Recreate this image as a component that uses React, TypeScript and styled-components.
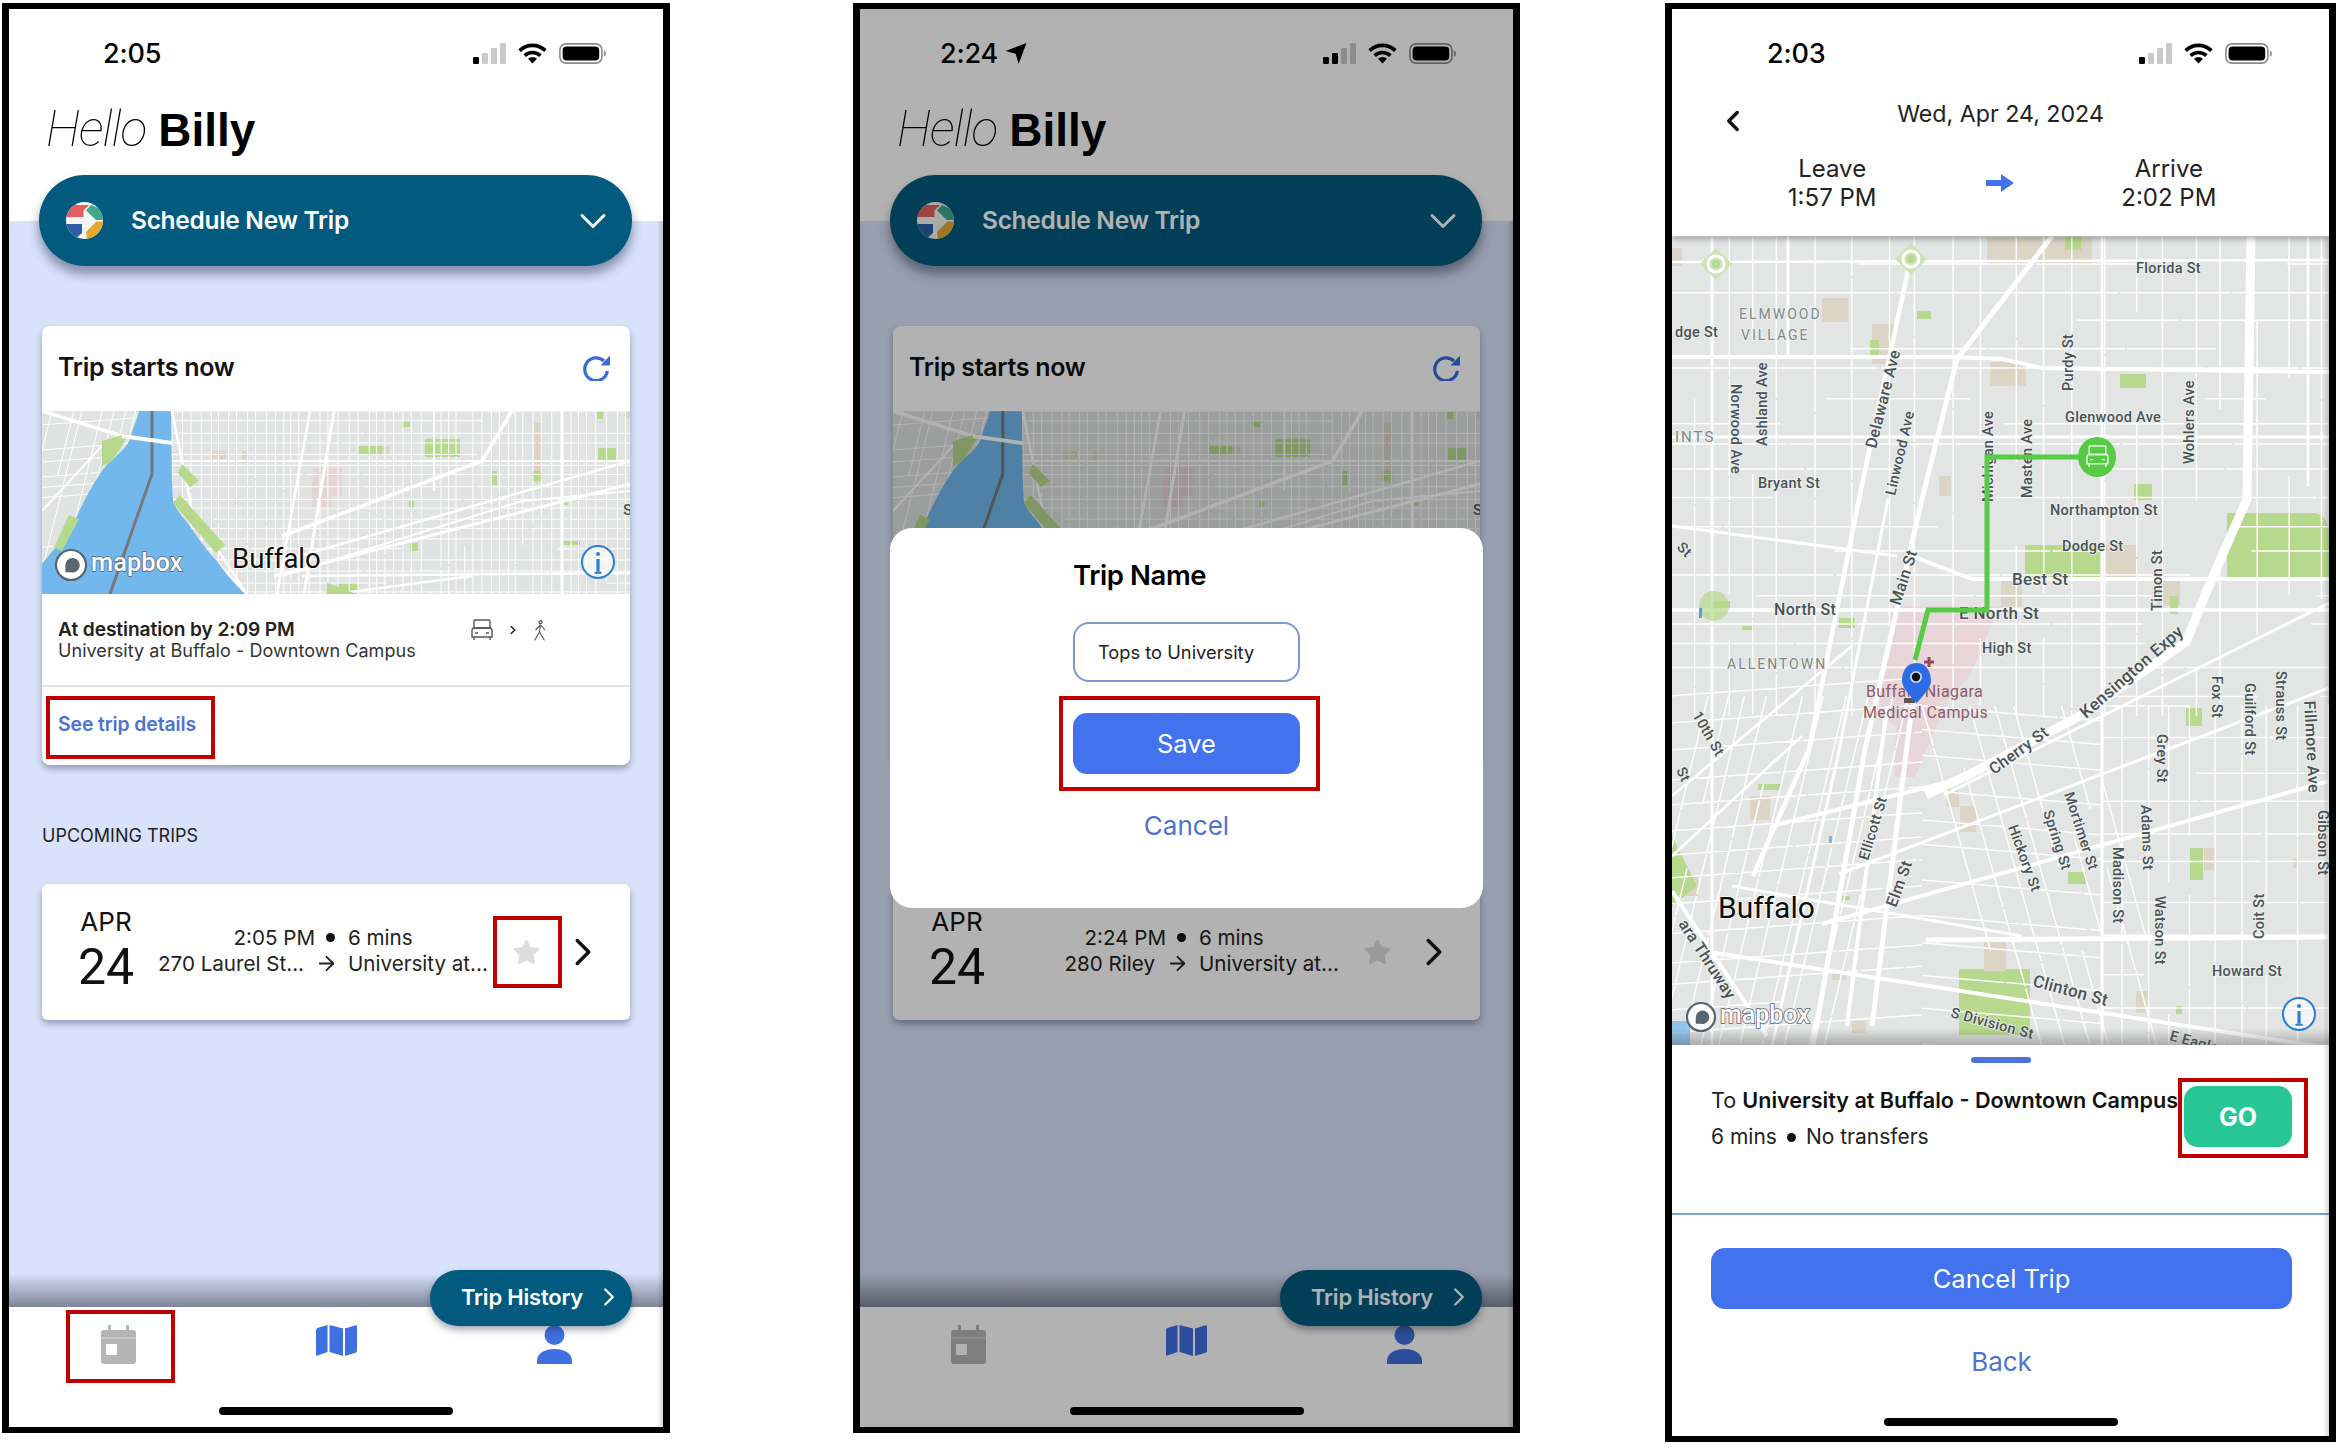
import React from 'react';
import styled, { createGlobalStyle } from 'styled-components';
import { ChevronDown, ChevronLeft, ChevronRight, ArrowRight } from 'lucide-react';

const BLUE = '#4272ee';
const LINK = '#4d72d6';
const TEAL = '#025a7e';
const RED = '#c00000';

const Global = createGlobalStyle`
  html, body { margin: 0; padding: 0; background: #fff; }
  body { font-family: Inter, "Liberation Sans", sans-serif; color: #111; }
  * { box-sizing: border-box; }
`;

const Stage = styled.div`
  width: 2346px;
  height: 1448px;
  overflow: hidden;
  display: flex;
  align-items: flex-start;
  padding: 3px 0 0 2px;
`;

const Phone = styled.section<{ $w: number; $h: number; $mr: number }>`
  position: relative;
  flex: none;
  width: ${p => p.$w}px;
  height: ${p => p.$h}px;
  margin-right: ${p => p.$mr}px;
  border-style: solid;
  border-color: #000;
  border-width: 6px 7px;
  background: #fff;
  overflow: hidden;
  display: flex;
  flex-direction: column;
  &::after {
    content: '';
    position: absolute;
    top: 0;
    bottom: 0;
    right: 0;
    width: 6px;
    background: linear-gradient(90deg, rgba(0,0,0,0), rgba(0,0,0,.16));
    pointer-events: none;
  }
`;

const StatusRow = styled.div<{ $left: number }>`
  flex: none;
  height: 88px;
  display: flex;
  align-items: center;
  justify-content: space-between;
  padding: 0 57px 0 ${p => p.$left}px;
`;
const TimeGroup = styled.div`
  display: flex;
  align-items: center;
  gap: 7px;
`;
const Time = styled.span`
  font-size: 27px;
  font-weight: 500;
  letter-spacing: -0.2px;
  color: #000;
`;
const StatusIcons = styled.div`
  display: flex;
  align-items: center;
  gap: 12px;
`;

const Header = styled.header`
  position: relative;
  z-index: 1;
  flex: none;
  background: #fff;
  padding-bottom: 0;
`;
const Greeting = styled.h1`
  margin: 9px 0 22px 37px;
  font-family: "Liberation Sans", Arial, sans-serif;
  font-size: 46px;
  line-height: 46px;
  font-weight: 400;
  color: #000;
`;
const Hello = styled.em`
  font-family: Roboto, "Liberation Sans", sans-serif;
  font-size: 50px;
  font-weight: 100;
  font-style: italic;
  letter-spacing: -1px;
  margin-right: 12px;
`;
const Name = styled.strong`
  font-weight: 700;
`;
const SchedulePill = styled.div`
  position: relative;
  height: 91px;
  margin: 0 31px -45px 30px;
  padding: 0 17px 0 27px;
  border-radius: 46px;
  background: ${TEAL};
  box-shadow: 0 8px 11px rgba(30, 40, 70, .45);
  display: flex;
  align-items: center;
  color: #fff;
`;
const PillTitle = styled.span`
  flex: 1;
  margin: 0 0 2px 28px;
  font-size: 24.5px;
  font-weight: 600;
  letter-spacing: -0.3px;
`;

const Body = styled.main`
  position: relative;
  flex: 1;
  background: #d8e2fa;
  padding: 105px 33px 0;
  &::after {
    content: '';
    position: absolute;
    left: 0;
    right: 0;
    bottom: 0;
    height: 34px;
    background: linear-gradient(180deg, rgba(40, 42, 55, 0), rgba(40, 42, 55, .5));
  }
`;
const Card = styled.article`
  background: #fff;
  border-radius: 8px;
  box-shadow: 0 4px 6px rgba(50, 60, 90, .4);
  overflow: hidden;
`;
const CardHead = styled.div`
  height: 85px;
  display: flex;
  align-items: center;
  justify-content: space-between;
  padding: 0 19px 3px 16px;
`;
const CardTitle = styled.h2`
  margin: 0;
  font-size: 25px;
  font-weight: 600;
  letter-spacing: -0.3px;
  color: #111;
`;
const MapFrame = styled.svg`
  display: block;
  width: 100%;
`;
const CardInfo = styled.div`
  height: 93px;
  display: flex;
  justify-content: space-between;
  align-items: flex-start;
  padding: 25px 83px 0 16px;
  border-bottom: 2px solid #e4e4e4;
`;
const InfoTitle = styled.div`
  font-size: 19.2px;
  line-height: 21px;
  font-weight: 600;
  color: #222;
  letter-spacing: -0.1px;
`;
const InfoSub = styled.div`
  font-size: 18px;
  line-height: 21px;
  color: #333;
  letter-spacing: .05px;
`;
const ModeIcons = styled.div`
  display: flex;
  align-items: center;
  gap: 13px;
  color: #555;
`;
const CardLink = styled.div`
  height: 78px;
  display: flex;
  align-items: center;
  padding: 0 16px 4px;
  font-size: 19.4px;
  font-weight: 600;
  color: ${LINK};
  letter-spacing: -0.1px;
`;
const SectionLabel = styled.h3`
  margin: 62px 0 39px;
  font-size: 18px;
  line-height: 18px;
  font-weight: 400;
  color: #222;
`;
const TripRow = styled.article`
  height: 136px;
  background: #fff;
  border-radius: 6px;
  box-shadow: 0 4px 6px rgba(50, 60, 90, .4);
  display: flex;
  align-items: center;
  padding-left: 32px;
`;
const DateBlock = styled.div`
  width: 64px;
  display: flex;
  flex-direction: column;
  align-items: center;
  margin-top: -5px;
`;
const Month = styled.span`
  font-size: 26px;
  line-height: 30px;
  color: #111;
`;
const Day = styled.span`
  font-family: Roboto, Inter, sans-serif;
  font-size: 50px;
  line-height: 50px;
  margin-top: 5px;
  color: #111;
`;
const TripGrid = styled.div`
  margin: -3px 0 0 20px;
  width: 332px;
  display: grid;
  grid-template-columns: 154px 36px 1fr;
  grid-auto-rows: 26px;
  align-items: center;
  font-size: 20.6px;
  color: #222;
  white-space: nowrap;
`;
const CellEnd = styled.span<{ $pull?: number }>`
  justify-self: end;
  margin-right: ${p => p.$pull ?? 0}px;
`;
const CellMid = styled.span<{ $pull?: number }>`
  justify-self: center;
  display: flex;
  margin-right: ${p => p.$pull ?? 0}px;
`;
const Dot = styled.i`
  width: 9px;
  height: 9px;
  border-radius: 50%;
  background: #111;
`;
const StarSlot = styled.div`
  margin-left: 23px;
  display: flex;
`;
const ChevronSlot = styled.div`
  margin-left: 20px;
  display: flex;
  color: #111;
`;

const TabBar = styled.nav`
  flex: none;
  height: 120px;
  background: #fff;
  display: flex;
  flex-direction: column;
  align-items: center;
`;
const TabIcons = styled.div`
  width: 100%;
  height: 100px;
  display: grid;
  grid-template-columns: repeat(3, 1fr);
  padding-top: 18px;
`;
const Tab = styled.div`
  display: flex;
  justify-content: center;
  align-items: flex-start;
`;
const HomeBar = styled.div<{ $top?: number }>`
  flex: none;
  width: 234px;
  height: 8px;
  margin: ${p => p.$top ?? 0}px auto 0;
  border-radius: 4px;
  background: #000;
`;
const HistoryPill = styled.div`
  position: absolute;
  z-index: 2;
  right: 31px;
  bottom: 101px;
  width: 202px;
  height: 56px;
  padding: 0 8px 2px 31px;
  border-radius: 28px;
  background: ${TEAL};
  box-shadow: 0 4px 7px rgba(30, 40, 70, .4);
  color: #fff;
  display: flex;
  align-items: center;
  justify-content: space-between;
  font-size: 22px;
  font-weight: 600;
  letter-spacing: -0.2px;
`;
const Highlight = styled.div<{ $x: number; $y: number; $w: number; $h: number }>`
  position: absolute;
  z-index: 6;
  left: ${p => p.$x}px;
  top: ${p => p.$y}px;
  width: ${p => p.$w}px;
  height: ${p => p.$h}px;
  border: 4px solid ${RED};
`;
const Dim = styled.div`
  position: absolute;
  z-index: 3;
  inset: 0;
  background: rgba(0, 0, 0, .3);
`;
const Modal = styled.div`
  position: absolute;
  z-index: 4;
  left: 30px;
  top: 519px;
  width: 593px;
  height: 380px;
  padding-top: 31px;
  background: #fff;
  border-radius: 22px;
  display: flex;
  flex-direction: column;
  align-items: center;
`;
const ModalColumn = styled.div`
  width: 227px;
  display: flex;
  flex-direction: column;
  align-items: center;
`;
const ModalTitle = styled.h2`
  align-self: flex-start;
  margin: 0 0 31px;
  font-size: 27.5px;
  line-height: 32px;
  font-weight: 600;
  letter-spacing: -0.4px;
  color: #000;
`;
const NameField = styled.div`
  width: 100%;
  height: 60px;
  padding-left: 23px;
  display: flex;
  align-items: center;
  border: 2px solid #7b98cf;
  border-radius: 16px;
  font-size: 18.3px;
  color: #222;
`;
const PrimaryButton = styled.button<{ $top: number }>`
  display: block;
  width: 100%;
  height: 61px;
  margin-top: ${p => p.$top}px;
  border: 0;
  border-radius: 14px;
  background: ${BLUE};
  color: #fff;
  font: 400 25.5px Inter, sans-serif;
`;
const TextAction = styled.div<{ $top: number }>`
  margin-top: ${p => p.$top}px;
  font-size: 26px;
  line-height: 34px;
  color: ${LINK};
  text-align: center;
`;

const DateRow = styled.div`
  margin-top: 2px;
  display: grid;
  grid-template-columns: 1fr auto 1fr;
  align-items: start;
`;
const BackSlot = styled.div`
  margin: 5px 0 -14px 44px;
  display: flex;
  color: #111;
`;
const DateText = styled.div`
  font-size: 23.2px;
  line-height: 30px;
  color: #222;
`;
const LegRow = styled.div`
  margin-top: 25px;
  padding: 0 76px 24px;
  display: grid;
  grid-template-columns: repeat(3, 1fr);
  align-items: center;
  text-align: center;
  font-size: 24px;
  line-height: 29px;
  color: #222;
`;
const ArrowSlot = styled.div`
  display: flex;
  justify-content: center;
`;
const DetailHeader = styled.header`
  position: relative;
  z-index: 1;
  flex: none;
  background: #fff;
  box-shadow: 0 3px 6px rgba(0, 0, 0, .3);
`;
const BigMap = styled.svg`
  display: block;
  flex: none;
  width: 100%;
`;
const Sheet = styled.div`
  position: relative;
  flex: 1;
  background: #fff;
  display: flex;
  flex-direction: column;
  padding-top: 12px;
`;
const Handle = styled.div`
  flex: none;
  width: 60px;
  height: 6px;
  margin: 0 auto;
  border-radius: 3px;
  background: #4a72d8;
`;
const SheetRow = styled.div`
  margin: 23px 37px 0 39px;
  display: flex;
  justify-content: space-between;
  align-items: flex-start;
`;
const DestLine = styled.div`
  font-size: 21.6px;
  line-height: 28px;
  color: #222;
  white-space: nowrap;
  b { font-weight: 600; color: #111; }
`;
const MetaLine = styled.div`
  margin-top: 9px;
  display: flex;
  align-items: center;
  gap: 10px;
  font-size: 21px;
  line-height: 28px;
  color: #222;
`;
const GoButton = styled.div`
  flex: none;
  width: 108px;
  height: 61px;
  border-radius: 14px;
  background: #26c795;
  color: #fff;
  font-size: 25px;
  font-weight: 700;
  display: flex;
  align-items: center;
  justify-content: center;
`;
const Divider = styled.hr`
  width: 100%;
  height: 2px;
  margin: 62px 0 0;
  border: 0;
  background: #7f9fd0;
`;
const SheetActions = styled.div`
  margin: 0 37px 0 39px;
`;

const RoadLabel = styled.text<{ $size?: number; $soft?: boolean }>`
  font-family: Roboto, sans-serif;
  font-size: ${p => p.$size ?? 14.5}px;
  font-weight: ${p => (p.$soft ? 400 : 500)};
  letter-spacing: ${p => (p.$soft ? '2px' : '.3px')};
  fill: ${p => (p.$soft ? '#7f888a' : '#4a5256')};
  paint-order: stroke;
  stroke: rgba(240, 242, 240, .8);
  stroke-width: 2px;
`;
const CityLabel = styled.text<{ $size: number }>`
  font-family: Roboto, sans-serif;
  font-size: ${p => p.$size}px;
  font-weight: 400;
  fill: #0c0c0c;
  paint-order: stroke;
  stroke: rgba(255, 255, 255, .85);
  stroke-width: 2px;
`;
const PoiLabel = styled.text`
  font-family: Roboto, sans-serif;
  font-size: 16px;
  letter-spacing: .4px;
  fill: #8e5a68;
`;
const BrandText = styled.text<{ $size: number }>`
  font-family: Roboto, sans-serif;
  font-size: ${p => p.$size}px;
  font-weight: 500;
  fill: #fff;
  stroke: #59666f;
  stroke-width: 1.6px;
  paint-order: stroke;
`;

/* ---------- icons ---------- */
const Signal = ({ on }: { on: number }) => (
  <svg width="33" height="21" viewBox="0 0 33 21">
    {[7, 11, 16, 21].map((h, i) => (
      <rect key={i} x={i * 9} y={21 - h} width="6" height={h} rx="1.2" fill={i < on ? '#000' : '#c9c9c9'} />
    ))}
  </svg>
);
const Wifi = () => (
  <svg width="29" height="21" viewBox="0 0 29 21" fill="none" stroke="#000" strokeWidth="3.6">
    <path d="M1.6 7.6A18.5 18.5 0 0 1 27.4 7.6" />
    <path d="M6.6 12.6A11.5 11.5 0 0 1 22.4 12.6" />
    <path d="M14.5 20.5L10 15.8A6.4 6.4 0 0 1 19 15.8Z" fill="#000" stroke="none" />
  </svg>
);
const Battery = () => (
  <svg width="47" height="21" viewBox="0 0 47 21">
    <rect x=".9" y=".9" width="42" height="19.2" rx="6" fill="none" stroke="#8c8c8c" strokeWidth="1.6" />
    <rect x="3.6" y="3.6" width="36.6" height="13.8" rx="4" fill="#000" />
    <path d="M44.8 7.2c1.4.4 2.2 1.6 2.2 3.3s-.8 2.9-2.2 3.3Z" fill="#9a9a9a" />
  </svg>
);
const NavArrow = () => (
  <svg width="22" height="23" viewBox="0 0 21 21">
    <path d="M20.5.5L13 20.5 10.2 10.8.5 8.2Z" fill="#000" />
  </svg>
);
const Logo = () => (
  <svg width="37" height="37" viewBox="0 0 37 37">
    <defs>
      <clipPath id="logoClip"><ellipse cx="18.5" cy="18.5" rx="18.5" ry="18.5" /></clipPath>
    </defs>
    <g clipPath="url(#logoClip)">
      <rect width="37" height="37" fill="#f4f4f4" />
      <path d="M0 3H23L17.5 8.5V15H0Z" fill="#e35f5f" />
      <path d="M25 3L37 8V18H30L20 8.5Z" fill="#3fa98a" />
      <path d="M0 22H16V31L9 37H0Z" fill="#2d5fa6" />
      <path d="M37 19.5H30.5L20 30L21 37H37Z" fill="#e5a92f" />
    </g>
  </svg>
);
const Refresh = () => (
  <svg width="29" height="27" viewBox="0 0 29 27" fill="none">
    <path d="M22 7A11.4 11.4 0 1 0 25.4 17" stroke="#3a6cd8" strokeWidth="3.2" />
    <path d="M28 1.5V11.5H18.5Z" fill="#3a6cd8" />
  </svg>
);
const CarOutline = ({ color = '#555', size = 22 }: { color?: string; size?: number }) => (
  <svg width={size} height={size} viewBox="0 0 22 22" fill="none" stroke={color} strokeWidth="1.4">
    <path d="M3 2.2Q3 1 4.2 1H17.8Q19 1 19 2.2V9H3Z" />
    <path d="M1 12Q1 9 3 9H19Q21 9 21 12V18H1Z" />
    <path d="M3 18V21M19 18V21M4 14H7M15 14H18" />
  </svg>
);
const Walker = () => (
  <svg width="14" height="21" viewBox="0 0 14 21" fill="none" stroke="#555" strokeWidth="1.1">
    <circle cx="7.5" cy="2.2" r="1.6" />
    <path d="M7.5 4.5L6.5 12M7.5 5L2.5 10M7.5 5L12 10M6.5 12L1.5 20.5M6.5 12L11.5 20.5" />
  </svg>
);
const Star = ({ color }: { color: string }) => (
  <svg width="27" height="26" viewBox="0 0 27 26">
    <path d="M13.5 2L17 9.3 25 10.3 19.2 15.8 20.8 23.8 13.5 19.9 6.2 23.8 7.8 15.8 2 10.3 10 9.3Z" fill={color} stroke={color} strokeWidth="2.4" strokeLinejoin="round" />
  </svg>
);
const Calendar = () => (
  <svg width="35" height="39" viewBox="0 0 35 39">
    <path d="M7 0h3v5h15V0h3v5h4a3 3 0 0 1 3 3v28a3 3 0 0 1-3 3H3a3 3 0 0 1-3-3V8a3 3 0 0 1 3-3h4Z" fill="#b5b5b5" />
    <rect x="0" y="12.5" width="35" height="1" fill="#dcdcdc" />
    <rect x="5" y="19" width="11" height="11" rx="1" fill="#fff" />
  </svg>
);
const MapTab = () => (
  <svg width="41" height="31" viewBox="0 0 41 31" fill="#3f6fe0">
    <path d="M0 5Q0 3.5 1.5 3L11.5 0V27L1.5 30.5Q0 31 0 29.5Z" />
    <path d="M13.5 0L27 3.5V31L13.5 27Z" />
    <path d="M29 3.5L39.5 .3Q41 0 41 1.5V26Q41 27.3 39.5 27.8L29 31Z" />
  </svg>
);
const Person = () => (
  <svg width="35" height="39" viewBox="0 0 35 39" fill="#3f6fe0">
    <circle cx="17.5" cy="10" r="10" />
    <path d="M0 39V36C0 28 8 24 17.5 24S35 28 35 36V39Z" />
  </svg>
);
const BlueArrow = () => (
  <svg width="28" height="18" viewBox="0 0 28 18" fill={BLUE}>
    <path d="M0 6H15V0L28 9L15 18V12H0Z" />
  </svg>
);

/* ---------- map drawings ---------- */
const rng = (seed: number) => {
  let s = seed;
  return () => {
    s = (s * 16807) % 2147483647;
    return s / 2147483647;
  };
};

const buildGrid = (
  seed: number,
  x0: number, x1: number, y0: number, y1: number,
  stepX: number, stepY: number,
  shearX = 0, skip = 0.25,
) => {
  const r = rng(seed);
  let d = '';
  for (let x = x0; x < x1; x += stepX * (0.75 + r() * 0.5)) {
    let y = y0;
    while (y < y1) {
      const len = 40 + r() * 170;
      const end = Math.min(y + len, y1);
      if (r() > skip) {
        d += `M${(x + (y - y0) * shearX).toFixed(1)} ${y.toFixed(1)}L${(x + (end - y0) * shearX).toFixed(1)} ${end.toFixed(1)}`;
      }
      y = end + 2;
    }
  }
  for (let y = y0; y < y1; y += stepY * (0.75 + r() * 0.5)) {
    let x = x0;
    while (x < x1) {
      const len = 40 + r() * 190;
      const end = Math.min(x + len, x1);
      if (r() > skip) {
        d += `M${x.toFixed(1)} ${(y + (x - x0) * shearX * 0.3).toFixed(1)}L${end.toFixed(1)} ${(y + (end - x0) * shearX * 0.3).toFixed(1)}`;
      }
      x = end + 2;
    }
  }
  return d;
};

const bigMinor = [
  buildGrid(11, -4, 660, 0, 480, 31, 25, 0, 0.2),
  buildGrid(23, -4, 250, 460, 815, 20, 24, -0.24, 0.12),
  buildGrid(37, 250, 430, 470, 815, 22, 30, 0.28, 0.15),
  buildGrid(53, 430, 660, 470, 815, 26, 34, 0, 0.12),
].join('');

const bigMajor: [string, number][] = [
  ['M0 121L280 121L330 123L370 132L657 136', 4],
  ['M0 26L657 24', 2.5],
  ['M0 201L657 201', 3],
  ['M0 374L657 374', 3.5],
  ['M240 320L300 343L657 343', 4],
  ['M0 290L225 320', 3],
  ['M40 0L40 810', 3],
  ['M116 0L116 120', 3],
  ['M237 30L187 263L137 513L81 640', 4.5],
  ['M380 0L285 123L250 263L193 513L141 810', 5],
  ['M216 263L166 520L100 810', 3],
  ['M430 0L430 235', 2.5],
  ['M636 0L636 250', 2.5],
  ['M150 688L657 545', 4],
  ['M167 638L657 452', 3],
  ['M272 559L657 367', 3],
  ['M254 704L657 701', 5],
  ['M37 716L657 812', 4],
  ['M0 560L180 410', 2.5],
  ['M0 620L130 500', 2.5],
  ['M100 590L300 540', 4],
  ['M60 650L350 700', 3],
  ['M200 790L240 470', 5],
  ['M175 790L215 470', 4],
  ['M0 655L95 800', 4],
  ['M430 240L430 810', 3],
];

type Spot = [number, number, number, number, string];
const GREEN = '#b7d98d';
const TAN = '#dcd5c6';
const bigSpots: Spot[] = [
  [315, 0, 105, 28, TAN], [393, 0, 16, 14, GREEN], [0, 12, 10, 18, TAN],
  [150, 62, 26, 24, TAN], [200, 88, 22, 40, TAN], [198, 104, 9, 18, GREEN],
  [245, 75, 14, 8, GREEN], [318, 126, 36, 24, TAN], [448, 138, 26, 14, GREEN],
  [267, 240, 12, 20, TAN], [462, 248, 18, 16, GREEN], [353, 309, 77, 32, GREEN],
  [434, 309, 32, 32, TAN], [329, 345, 21, 26, TAN], [486, 344, 22, 26, TAN],
  [498, 360, 8, 18, GREEN], [40, 365, 18, 10, GREEN], [167, 382, 16, 10, GREEN],
  [70, 390, 12, 4, GREEN], [514, 472, 16, 18, GREEN],
  [518, 612, 13, 32, GREEN], [532, 612, 11, 22, TAN], [621, 622, 5, 10, TAN],
  [396, 636, 18, 12, GREEN], [275, 553, 12, 18, TAN], [288, 570, 16, 26, TAN],
  [78, 560, 20, 24, TAN], [86, 548, 22, 6, GREEN], [312, 705, 22, 30, TAN],
  [170, 660, 8, 4, GREEN], [0, 640, 26, 20, TAN], [180, 785, 14, 12, TAN],
  [160, 734, 14, 10, TAN], [464, 755, 12, 22, TAN], [504, 770, 6, 8, GREEN],
];

type Road = [string, number, number, number, number?, boolean?];
const bigLabels: Road[] = [
  ['Florida St', 464, 37, 0],
  ['ELMWOOD', 67, 83, 0, 14, true],
  ['VILLAGE', 69, 104, 0, 14, true],
  ['dge St', 3, 101, 0],
  ['Norwood Ave', 59, 148, 90],
  ['Ashland Ave', 95, 210, -90],
  ['Delaware Ave', 204, 213, -76, 16],
  ['Linwood Ave', 223, 260, -77],
  ['Purdy St', 401, 155, -90],
  ['Glenwood Ave', 393, 186, 0],
  ['Wohlers Ave', 522, 228, -90],
  ['Michigan Ave', 321, 266, -90],
  ['Masten Ave', 360, 262, -90],
  ['INTS', 3, 206, 0, 15, true],
  ['Bryant St', 86, 252, 0],
  ['Northampton St', 378, 279, 0],
  ['Dodge St', 390, 315, 0],
  ['Timon St', 490, 375, -90],
  ['Best St', 340, 349, 0, 17],
  ['E North St', 287, 383, 0, 17],
  ['North St', 102, 379, 0, 16],
  ['Main St', 228, 370, -72, 16],
  ['High St', 310, 417, 0],
  ['ALLENTOWN', 55, 433, 0, 14, true],
  ['St', 4, 312, 45],
  ['Kensington Expy', 414, 483, -41, 17],
  ['Cherry St', 322, 539, -36, 16],
  ['Fox St', 540, 440, 90],
  ['Guilford St', 573, 447, 90],
  ['Strauss St', 604, 435, 90],
  ['Fillmore Ave', 632, 465, 87, 16],
  ['Grey St', 485, 498, 90],
  ['Adams St', 469, 569, 88],
  ['Gibson St', 646, 574, 90],
  ['Ellicott St', 196, 625, -73],
  ['10th St', 20, 479, 60],
  ['St', 4, 534, 65],
  ['Mortimer St', 392, 558, 72],
  ['Spring St', 371, 576, 72],
  ['Hickory St', 336, 591, 70],
  ['Madison St', 441, 611, 90],
  ['Watson St', 483, 660, 90],
  ['Elm St', 224, 672, -70, 16],
  ['Coit St', 592, 703, -90],
  ['Howard St', 540, 740, 0],
  ['Clinton St', 360, 750, 15, 17],
  ['S Division St', 278, 781, 15],
  ['E Eagle St', 497, 804, 15],
  ['ara Thruway', 6, 688, 57, 16],
];

const MapboxMark = ({ x, y, s, size }: { x: number; y: number; s: number; size: number }) => (
  <g>
    <circle cx={x + s} cy={y + s} r={s - 1} fill="#fff" stroke="#59666f" strokeWidth="2.2" />
    <path
      d={`M${x + s * 0.65} ${y + s * 1.45}V${y + s}A${s * 0.45} ${s * 0.45} 0 1 1 ${x + s} ${y + s * 1.45}Z`}
      fill="#59666f"
    />
    <BrandText x={x + s * 2 + 4} y={y + s * 1.4} $size={size}>mapbox</BrandText>
  </g>
);
const InfoMark = ({ x, y, r }: { x: number; y: number; r: number }) => (
  <g>
    <circle cx={x} cy={y} r={r} fill="rgba(255,255,255,.6)" stroke="#2a7fd6" strokeWidth="2" />
    <rect x={x - 1.6} y={y - 3} width="3.2" height={r * 0.8} fill="#2a7fd6" />
    <rect x={x - 3.6} y={y + r * 0.8 - 3} width="7.2" height="2" fill="#2a7fd6" />
    <circle cx={x} cy={y - r * 0.5} r="2" fill="#2a7fd6" />
  </g>
);
const Roundabout = ({ x, y }: { x: number; y: number }) => (
  <g>
    <path d={`M${x - 16} ${y}L${x} ${y - 16}L${x + 16} ${y}L${x} ${y + 16}Z`} fill="#cfe2b4" />
    <circle cx={x} cy={y} r="8" fill="none" stroke="#fff" strokeWidth="3" />
    <circle cx={x} cy={y} r="4" fill={GREEN} />
  </g>
);

const RouteMap = () => (
  <BigMap viewBox="0 0 657 809" height="809">
    <rect width="657" height="809" fill="#e2e5e3" />
    <path d="M220 370H328L297 441L276 463L243 541H222L224 491L206 477Z" fill="#e8d5d9" />
    <path d="M555 277H640Q657 277 657 300V343H555Z" fill={GREEN} />
    <path d="M287 733H358V799H287Z" fill={GREEN} />
    {bigSpots.map(([x, y, w, h, c], i) => <rect key={i} x={x} y={y} width={w} height={h} fill={c} />)}
    <path d="M0 600L25 650L0 670Z" fill={GREEN} />
    <path d={bigMinor} stroke="#fff" strokeWidth="1.5" fill="none" opacity=".95" />
    {bigMajor.map(([d, w], i) => <path key={i} d={d} stroke="#fff" strokeWidth={w} fill="none" />)}
    <path d="M579 0L575 263L536 352L514 406L406 481L298 538L254 559" stroke="#fff" strokeWidth="9" fill="none" />
    <Roundabout x={44} y={28} />
    <Roundabout x={239} y={23} />
    <circle cx="42" cy="370" r="15" fill={GREEN} opacity=".7" />
    <path d="M0 785H18V809H0Z" fill="#72b8ec" opacity=".7" />
    <rect x="27" y="372" width="3" height="10" fill="#5aa0e0" />
    <rect x="157" y="600" width="3" height="7" fill="#72b8ec" />
    {bigLabels.map(([t, x, y, a, size, soft], i) => (
      <RoadLabel key={i} transform={`translate(${x} ${y}) rotate(${a})`} $size={size} $soft={soft}>{t}</RoadLabel>
    ))}
    <PoiLabel x="194" y="461">Buffalo Niagara</PoiLabel>
    <PoiLabel x="191" y="482">Medical Campus</PoiLabel>
    <CityLabel x="46" y="682" $size={30}>Buffalo</CityLabel>
    <polyline points="425,221 315,221 315,374 256,374 243,424" fill="none" stroke="#55cc44" strokeWidth="5" />
    <ellipse cx="425" cy="221" rx="19" ry="20" fill="#55cc44" />
    <g transform="translate(414 209)"><CarOutline color="#e8f4e4" size={23} /></g>
    <path d="M252 426H262M257 421V431" stroke="#8e4a55" strokeWidth="3" />
    <rect x="232" y="462" width="11" height="5" fill="#555" />
    <path d="M244.5 427C233 427 230 438 230 445C230 452 240 462 244.5 467C249 462 259 452 259 445C259 438 256 427 244.5 427Z" fill="#2c6ce6" />
    <circle cx="244" cy="441" r="6" fill="#fff" opacity=".7" />
    <circle cx="244" cy="441" r="4.2" fill="#111" />
    <MapboxMark x={14} y={766} s={15} size={25} />
    <InfoMark x={627} y={778} r={16} />
    <rect y="792" width="657" height="17" fill="url(#fadeBottom)" />
    <defs>
      <linearGradient id="fadeBottom" x1="0" y1="0" x2="0" y2="1">
        <stop offset="0" stopColor="#444" stopOpacity="0" />
        <stop offset="1" stopColor="#444" stopOpacity=".35" />
      </linearGradient>
    </defs>
  </BigMap>
);

const thumbMinor = [
  buildGrid(71, 130, 590, 0, 183, 9, 11, 0, 0.1),
  buildGrid(91, 0, 100, 0, 183, 10, 12, -0.25, 0.1),
].join('');
const thumbMajor: [string, number][] = [
  ['M130 0L150 100L205 183', 2.5],
  ['M292 0L262 183', 3],
  ['M268 0L235 183', 2.5],
  ['M232 165L588 73', 3],
  ['M240 150L588 50', 2.5],
  ['M240 125L440 50L470 0', 3.5],
  ['M392 0L392 80', 2],
  ['M520 0L520 183', 3],
  ['M130 50L588 50', 2],
  ['M260 165L588 162', 2.5],
  ['M240 190L430 165', 2.5],
  ['M0 0L80 25L130 30', 3.5],
  ['M0 100L60 35', 2],
  ['M155 130L205 183', 2],
  ['M588 80L480 90L240 165', 2],
];
const thumbSpots: Spot[] = [
  [316, 35, 24, 9, GREEN], [340, 35, 8, 9, TAN], [383, 28, 35, 18, GREEN],
  [492, 12, 8, 60, TAN], [490, 60, 10, 10, GREEN], [556, 37, 18, 14, GREEN],
  [555, 0, 6, 8, GREEN], [583, 0, 5, 8, TAN], [360, 10, 8, 6, GREEN],
  [272, 57, 28, 28, '#e6d3d6'], [270, 70, 20, 28, '#e6d3d6'], [450, 60, 5, 14, GREEN],
  [367, 90, 5, 6, GREEN], [368, 132, 8, 8, GREEN], [295, 172, 20, 11, GREEN],
  [520, 130, 18, 4, GREEN], [520, 90, 6, 4, GREEN], [170, 40, 14, 8, TAN], [200, 40, 6, 12, TAN],
];

const ThumbMap = () => (
  <MapFrame viewBox="0 0 588 183" height="183">
    <rect width="588" height="183" fill="#e0e3e1" />
    {thumbSpots.map(([x, y, w, h, c], i) => <rect key={i} x={x} y={y} width={w} height={h} fill={c} />)}
    <path d={thumbMinor} stroke="#fff" strokeWidth="1" fill="none" />
    {thumbMajor.map(([d, w], i) => <path key={i} d={d} stroke="#fff" strokeWidth={w} fill="none" />)}
    <path d="M97 0H129C130 30 129 60 131 90C135 100 140 105 144 110C155 125 165 140 175 150C185 165 195 175 203 183H0V153C10 140 20 130 27 120C38 100 46 80 58 63C70 45 85 40 88 27C92 15 95 8 97 0Z" fill="#72b8ec" />
    <path d="M140 53L157 70L148 76L136 62ZM138 84L183 134L174 142L131 92Z" fill={GREEN} />
    <path d="M27 104L37 108L20 140L12 136ZM60 30L88 22L70 50L60 55Z" fill={GREEN} />
    <path d="M285 172L315 183H285Z" fill={GREEN} />
    <path d="M110 0V63L68 183" fill="none" stroke="#777" strokeWidth="3" />
    <path d="M80 25L130 32" stroke="#fff" strokeWidth="4" />
    <MapboxMark x={13} y={138} s={16} size={25.5} />
    <CityLabel x="190" y="157" $size={27.5}>Buffalo</CityLabel>
    <RoadLabel x="581" y="104" $size={15}>S</RoadLabel>
    <InfoMark x={556} y={151} r={16} />
  </MapFrame>
);

/* ---------- screens ---------- */
const Status = ({ time, left, bars, nav }: { time: string; left: number; bars: number; nav?: boolean }) => (
  <StatusRow $left={left}>
    <TimeGroup>
      <Time>{time}</Time>
      {nav && <NavArrow />}
    </TimeGroup>
    <StatusIcons>
      <Signal on={bars} />
      <Wifi />
      <Battery />
    </StatusIcons>
  </StatusRow>
);

const Home = ({ time, left, bars, nav, tripTime, from }: {
  time: string; left: number; bars: number; nav?: boolean; tripTime: string; from: string;
}) => (
  <>
    <Header>
      <Status time={time} left={left} bars={bars} nav={nav} />
      <Greeting><Hello>Hello</Hello><Name>Billy</Name></Greeting>
      <SchedulePill>
        <Logo />
        <PillTitle>Schedule New Trip</PillTitle>
        <ChevronDown size={44} strokeWidth={1.6} />
      </SchedulePill>
    </Header>
    <Body>
      <Card>
        <CardHead>
          <CardTitle>Trip starts now</CardTitle>
          <Refresh />
        </CardHead>
        <ThumbMap />
        <CardInfo>
          <div>
            <InfoTitle>At destination by 2:09 PM</InfoTitle>
            <InfoSub>University at Buffalo - Downtown Campus</InfoSub>
          </div>
          <ModeIcons>
            <CarOutline />
            <ChevronRight size={14} strokeWidth={2.6} color="#222" />
            <Walker />
          </ModeIcons>
        </CardInfo>
        <CardLink>See trip details</CardLink>
      </Card>
      <SectionLabel>UPCOMING TRIPS</SectionLabel>
      <TripRow>
        <DateBlock>
          <Month>APR</Month>
          <Day>24</Day>
        </DateBlock>
        <TripGrid>
          <CellEnd $pull={-3}>{tripTime}</CellEnd>
          <CellMid><Dot /></CellMid>
          <span>6 mins</span>
          <CellEnd $pull={8}>{from}</CellEnd>
          <CellMid $pull={8}><ArrowRight size={23} strokeWidth={1.9} /></CellMid>
          <span>University at...</span>
        </TripGrid>
        <StarSlot><Star color="#dcdcdc" /></StarSlot>
        <ChevronSlot><ChevronRight size={46} strokeWidth={1.8} /></ChevronSlot>
      </TripRow>
    </Body>
    <TabBar>
      <TabIcons>
        <Tab><Calendar /></Tab>
        <Tab><MapTab /></Tab>
        <Tab><Person /></Tab>
      </TabIcons>
      <HomeBar />
    </TabBar>
    <HistoryPill>
      Trip History
      <ChevronRight size={30} strokeWidth={1.9} />
    </HistoryPill>
  </>
);

export default function App() {
  return (
    <>
      <Global />
      <Stage>
        <Phone $w={668} $h={1430} $mr={183}>
          <Home time="2:05" left={94} bars={1} tripTime="2:05 PM" from="270 Laurel St..." />
          <Highlight $x={37} $y={687} $w={169} $h={63} />
          <Highlight $x={484} $y={907} $w={69} $h={72} />
          <Highlight $x={57} $y={1301} $w={109} $h={73} />
        </Phone>

        <Phone $w={667} $h={1430} $mr={145}>
          <Home time="2:24" left={80} bars={2} nav tripTime="2:24 PM" from="280 Riley" />
          <Dim />
          <Modal>
            <ModalColumn>
              <ModalTitle>Trip Name</ModalTitle>
              <NameField>Tops to University</NameField>
              <PrimaryButton $top={31}>Save</PrimaryButton>
              <TextAction $top={35}>Cancel</TextAction>
            </ModalColumn>
          </Modal>
          <Highlight $x={199} $y={687} $w={261} $h={95} />
        </Phone>

        <Phone $w={671} $h={1439} $mr={0}>
          <DetailHeader>
            <Status time="2:03" left={95} bars={1} />
            <DateRow>
              <BackSlot><ChevronLeft size={34} strokeWidth={2.4} /></BackSlot>
              <DateText>Wed, Apr 24, 2024</DateText>
            </DateRow>
            <LegRow>
              <div>Leave<br />1:57 PM</div>
              <ArrowSlot><BlueArrow /></ArrowSlot>
              <div>Arrive<br />2:02 PM</div>
            </LegRow>
          </DetailHeader>
          <RouteMap />
          <Sheet>
            <Handle />
            <SheetRow>
              <div>
                <DestLine>To <b>University at Buffalo - Downtown Campus</b></DestLine>
                <MetaLine>6 mins <Dot /> No transfers</MetaLine>
              </div>
              <GoButton>GO</GoButton>
            </SheetRow>
            <Divider />
            <SheetActions>
              <PrimaryButton $top={33}>Cancel Trip</PrimaryButton>
              <TextAction $top={36}>Back</TextAction>
            </SheetActions>
            <HomeBar $top={39} />
          </Sheet>
          <Highlight $x={506} $y={1069} $w={130} $h={80} />
        </Phone>
      </Stage>
    </>
  );
}
